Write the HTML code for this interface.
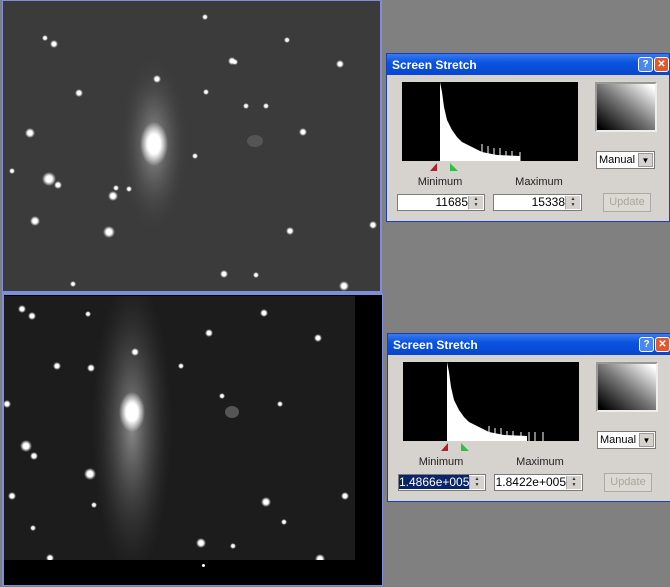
<!DOCTYPE html>
<html><head><style>
body{margin:0;width:670px;height:587px;background:#808080;position:relative;overflow:hidden;font-family:"Liberation Sans",sans-serif}
.abs{position:absolute}
.dlg{position:absolute;width:284px;height:169px;background:#d6d3ce;border:1px solid #1c3fb8;box-sizing:border-box}
.tb{position:absolute;left:0;top:0;right:0;height:21px;background:linear-gradient(#3a7bf0,#0a54e0 40%,#0846d0);color:#fff;font-weight:bold;font-size:12px;line-height:22px;padding-left:5px}
.btn{position:absolute;top:3px;width:15px;height:15px;border:1px solid #fff;border-radius:3px;box-sizing:border-box;color:#fff;font-size:10px;text-align:center;line-height:13px}
.hist{position:absolute;background:#000;width:176px;height:79px}
.grad{position:absolute;width:62px;height:50px;background:linear-gradient(to top right,#000 5%,#777 50%,#fff 95%);border:2px solid #eee;border-left-color:#999;border-top-color:#999;box-sizing:border-box}
.dd{position:absolute;width:59px;height:18px;background:#fff;border:1px solid #7a7a7a;box-sizing:border-box;font-size:11px;line-height:16px;padding-left:2px;white-space:nowrap}
.dd b{position:absolute;right:1px;top:1px;width:15px;height:14px;background:#d6d3ce;border:1px solid #999;box-sizing:border-box;font-size:8px;line-height:13px;text-align:center;font-weight:normal}
.lbl{position:absolute;font-size:11px;color:#222;width:80px;text-align:center}
.inp{position:absolute;height:17px;background:#fff;border:1px solid #7a7a7a;box-sizing:border-box;font-size:12px;line-height:15px;text-align:right;padding-right:16px}
.inp i{position:absolute;right:1px;top:1px;width:14px;height:13px;background:#d6d3ce;border-left:1px solid #aaa;font-style:normal;font-size:5px;line-height:6px;text-align:center;color:#333}
.upd{position:absolute;width:48px;height:19px;border:1px solid #aaa;box-sizing:border-box;color:#a8a6a0;font-size:11px;line-height:17px;text-align:center;background:#dcd9d3}
</style></head><body>

<div class="abs" style="left:2px;top:0;width:380px;height:293px;background:#7f8ed8"></div>
<svg class="abs" style="left:3px;top:1px" width="377" height="290">
<defs>
<radialGradient id="s"><stop offset="0" stop-color="#fff"/><stop offset=".45" stop-color="#fff"/><stop offset="1" stop-color="#fff" stop-opacity="0"/></radialGradient>
<radialGradient id="h"><stop offset="0" stop-color="#999"/><stop offset="1" stop-color="#3a3a3a" stop-opacity="0"/></radialGradient>
</defs>
<rect width="377" height="290" fill="#3b3b3b"/>
<ellipse cx="151" cy="143" rx="35" ry="90" fill="url(#h)"/>
<ellipse cx="151" cy="143" rx="14" ry="22" fill="url(#s)"/>
<g fill="url(#s)">
<circle cx="27" cy="132" r="5"/><circle cx="46" cy="178" r="7"/><circle cx="55" cy="184" r="4"/><circle cx="32" cy="220" r="5"/><circle cx="106" cy="231" r="6"/><circle cx="110" cy="195" r="5"/><circle cx="76" cy="92" r="4"/><circle cx="154" cy="78" r="4"/><circle cx="229" cy="60" r="4"/><circle cx="203" cy="91" r="3"/><circle cx="284" cy="39" r="3"/><circle cx="337" cy="63" r="4"/><circle cx="300" cy="131" r="4"/><circle cx="287" cy="230" r="4"/><circle cx="221" cy="273" r="4"/><circle cx="341" cy="285" r="5"/><circle cx="370" cy="224" r="4"/><circle cx="51" cy="43" r="4"/><circle cx="42" cy="37" r="3"/><circle cx="202" cy="16" r="3"/><circle cx="113" cy="187" r="3"/><circle cx="192" cy="155" r="3"/><circle cx="126" cy="188" r="3"/><circle cx="70" cy="283" r="3"/><circle cx="253" cy="274" r="3"/><circle cx="9" cy="170" r="3"/><circle cx="243" cy="105" r="3"/><circle cx="232" cy="61" r="3"/><circle cx="263" cy="105" r="3"/>
</g>
<ellipse cx="252" cy="140" rx="8" ry="6" fill="#555"/>
</svg>

<div class="abs" style="left:2px;top:293px;width:381px;height:293px;background:#7f8ed8"></div>
<div class="abs" style="left:4px;top:295px;width:378px;height:290px;background:#000"></div>
<svg class="abs" style="left:4px;top:296px" width="351" height="264">
<rect width="351" height="264" fill="#1c1c1c"/>
<ellipse cx="128" cy="130" rx="40" ry="150" fill="url(#h)" opacity=".9"/>
<ellipse cx="128" cy="116" rx="13" ry="20" fill="url(#s)"/>
<g fill="url(#s)">
<circle cx="18" cy="13" r="4"/><circle cx="28" cy="20" r="4"/><circle cx="84" cy="18" r="3"/><circle cx="205" cy="37" r="4"/><circle cx="260" cy="17" r="4"/><circle cx="314" cy="42" r="4"/><circle cx="131" cy="56" r="4"/><circle cx="53" cy="70" r="4"/><circle cx="87" cy="72" r="4"/><circle cx="177" cy="70" r="3"/><circle cx="3" cy="108" r="4"/><circle cx="218" cy="100" r="3"/><circle cx="276" cy="108" r="3"/><circle cx="22" cy="150" r="6"/><circle cx="30" cy="160" r="4"/><circle cx="86" cy="178" r="6"/><circle cx="8" cy="200" r="4"/><circle cx="29" cy="232" r="3"/><circle cx="46" cy="262" r="4"/><circle cx="197" cy="247" r="5"/><circle cx="262" cy="206" r="5"/><circle cx="280" cy="226" r="3"/><circle cx="341" cy="200" r="4"/><circle cx="316" cy="263" r="5"/><circle cx="229" cy="250" r="3"/><circle cx="90" cy="209" r="3"/>
</g>
<ellipse cx="228" cy="116" rx="7" ry="6" fill="#555"/>
</svg>
<div class="abs" style="left:202px;top:564px;width:3px;height:3px;background:#fff;border-radius:50%"></div>

<div class="dlg" style="left:386px;top:53px">
<div class="tb">Screen Stretch<div class="btn" style="left:251px;background:#4a86f0">?</div><div class="btn" style="left:267px;background:#e0582c">✕</div></div>
<div class="hist" style="left:15px;top:28px"><svg width="176" height="79"><path d="M38 79 L38 0 L40 10 L42 25 L45 38 L50 48 L55 55 L60 60 L70 65 L80 70 L95 73 L118 74 L118 79 Z" fill="#fff"/><g stroke="#fff" stroke-width="1"><path d="M80 79V62M86 79V64M92 79V66M98 79V66M104 79V69M110 79V69M118 79V70"/></g></svg></div>
<svg class="abs" style="left:42px;top:108px" width="30" height="10"><path d="M1 9 L8 1 L8 9 Z" fill="#b0202a"/><path d="M21 1 L29 9 L21 9 Z" fill="#30c040"/></svg>
<div class="grad" style="left:208px;top:28px"></div>
<div class="dd" style="left:209px;top:97px">Manual<b>▼</b></div>
<div class="lbl" style="left:13px;top:122px">Minimum</div>
<div class="lbl" style="left:112px;top:122px">Maximum</div>
<div class="inp" style="left:10px;top:140px;width:88px">11685<i>▲<br>▼</i></div>
<div class="inp" style="left:106px;top:140px;width:89px">15338<i>▲<br>▼</i></div>
<div class="upd" style="left:216px;top:139px">Update</div>
</div>

<div class="dlg" style="left:387px;top:333px">
<div class="tb">Screen Stretch<div class="btn" style="left:251px;background:#4a86f0">?</div><div class="btn" style="left:267px;background:#e0582c">✕</div></div>
<div class="hist" style="left:15px;top:28px"><svg width="176" height="79"><path d="M44 79 L44 0 L46 10 L48 25 L51 38 L56 48 L61 55 L66 60 L76 65 L86 70 L101 73 L124 74 L124 79 Z" fill="#fff"/><g stroke="#fff" stroke-width="1"><path d="M86 79V64M92 79V66M98 79V66M104 79V69M110 79V69M118 79V70M126 79V70M132 79V70M140 79V70"/></g></svg></div>
<svg class="abs" style="left:52px;top:108px" width="30" height="10"><path d="M1 9 L8 1 L8 9 Z" fill="#b0202a"/><path d="M21 1 L29 9 L21 9 Z" fill="#30c040"/></svg>
<div class="grad" style="left:208px;top:28px"></div>
<div class="dd" style="left:209px;top:97px">Manual<b>▼</b></div>
<div class="lbl" style="left:13px;top:122px">Minimum</div>
<div class="lbl" style="left:112px;top:122px">Maximum</div>
<div class="inp" style="left:10px;top:140px;width:88px"><span style="background:#0a246a;color:#fff">1.4866e+005</span><i>▲<br>▼</i></div>
<div class="inp" style="left:106px;top:140px;width:89px">1.8422e+005<i>▲<br>▼</i></div>
<div class="upd" style="left:216px;top:139px">Update</div>
</div>
</body></html>
